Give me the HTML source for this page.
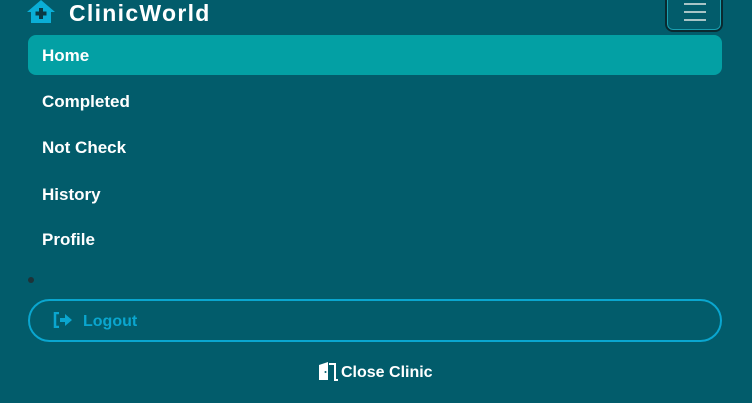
<!DOCTYPE html>
<html><head><style>
body{margin:0;width:752px;height:403px;background:#025c6b;font-family:"Liberation Sans",sans-serif;overflow:hidden;position:relative;color:#fff}
.a{position:absolute}
.brand{left:69px;top:0;font-size:23px;font-weight:bold;line-height:26px;letter-spacing:1.3px}
.nav{left:28px;width:694px;height:40px;border-radius:8px;font-size:17px;font-weight:bold;line-height:42px;padding-left:14px;box-sizing:border-box}
.tog{left:665px;top:-8px;width:58px;height:40px;border:2px solid #0a2a30;border-radius:8px;box-sizing:border-box;box-shadow:inset 0 0 0 1px #1aa0b0}
.tog i{position:absolute;left:17px;width:22px;height:2px;background:#a8c4c6}
</style></head><body>
<svg class="a" style="left:27px;top:0" width="28" height="24" viewBox="0 0 28 24"><path d="M14 0 L28 12 L24 12 L24 23 L4 23 L4 12 L0 12 Z" fill="#0aaed6"/><rect x="12" y="8" width="4" height="11" fill="#0a3a45"/><rect x="8.5" y="11.5" width="11" height="4" fill="#0a3a45"/></svg>
<div class="a brand">ClinicWorld</div>
<div class="a tog"><i style="top:9px"></i><i style="top:17px"></i><i style="top:25px"></i></div>
<div class="a nav" style="top:35px;background:#03a0a4">Home</div>
<div class="a nav" style="top:81px">Completed</div>
<div class="a nav" style="top:127px">Not Check</div>
<div class="a nav" style="top:174px">History</div>
<div class="a nav" style="top:219px">Profile</div>
<div class="a" style="left:28px;top:277px;width:6px;height:6px;border-radius:50%;background:#1d3338"></div>
<div class="a" style="left:28px;top:299px;width:694px;height:43px;border:2px solid #0aa6cf;border-radius:22px;box-sizing:border-box"></div>
<svg class="a" style="left:53px;top:312px" width="20" height="16" viewBox="0 0 20 16"><path d="M6 1H2v14h4" fill="none" stroke="#0aa6cf" stroke-width="2.5"/><path d="M7 6h5V2l7 6-7 6v-4H7z" fill="#0aa6cf"/></svg>
<div class="a" style="left:83px;top:313px;font-size:16px;font-weight:bold;color:#0aa6cf">Logout</div>
<svg class="a" style="left:318px;top:362px" width="22" height="19" viewBox="0 0 22 19"><path d="M1 18V3l9-3v18z" fill="#fff"/><path d="M11 2h6v16h3" fill="none" stroke="#fff" stroke-width="2"/><circle cx="7.5" cy="10" r="1" fill="#025c6b"/></svg>
<div class="a" style="left:341px;top:364px;font-size:16px;font-weight:bold">Close Clinic</div>
</body></html>
